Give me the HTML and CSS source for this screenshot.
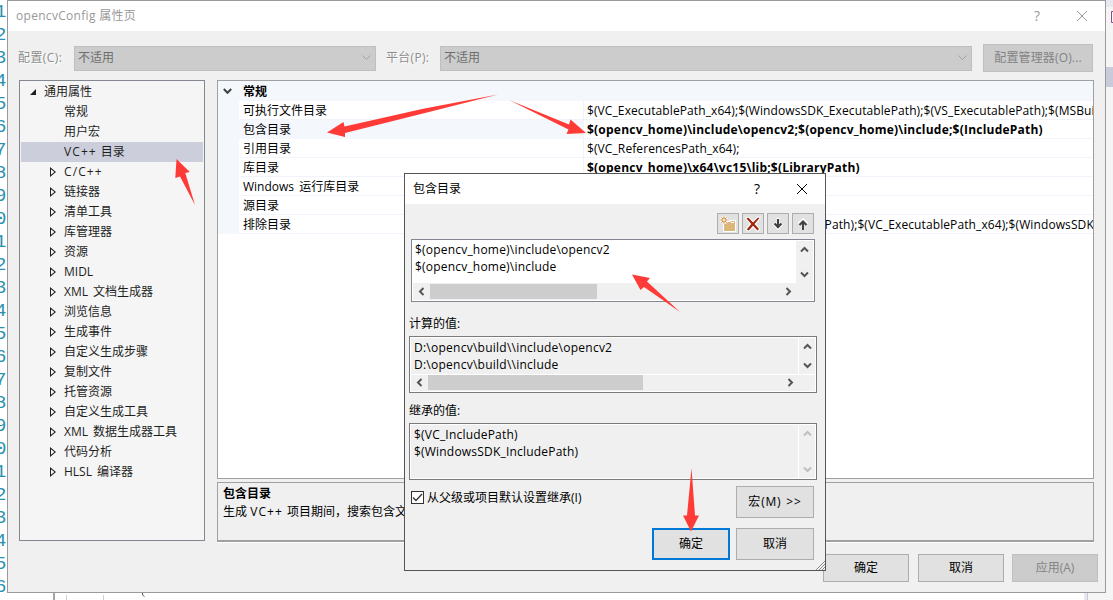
FILE: index.html
```html
<!DOCTYPE html>
<html lang="zh-CN">
<head>
    <meta charset="UTF-8">
    <title>opencvConfig 属性页</title>
    <link rel="stylesheet" href="styles.css">
</head>

<body>
    <!-- 后面的编辑器 -->
    <div class="line-numbers">
        <span>1</span><span>2</span><span>3</span><span>4</span><span>5</span><span>6</span><span>7</span><span>8</span><span>9</span><span>0</span>
        <span>1</span><span>2</span><span>3</span><span>4</span><span>5</span><span>6</span><span>7</span><span>8</span><span>9</span><span>0</span>
        <span>1</span><span>2</span><span>3</span><span>4</span><span>5</span><span>6</span>
    </div>
    <svg class="editor-bits" width="1113" height="600">
        <path d="M1084 592h4v8h-4z" fill="#e6e7f0"/>
        <path d="M1087.5 592v8" stroke="#c8c9d6"/>
        <path d="M1088 0h25v600h-25z" fill="#f5f5f5"/>
        <path d="M1104 0h9v7h-9z" fill="#e8e8f0"/>
        <path d="M1105 67h8v20h-8z" fill="#c9cbdb"/>
        <path d="M1115 11.5h-3.500v11h3.500" fill="none" stroke="#93478f"/>
        <path d="M54 592v8" stroke="#a5a5a5" stroke-width="2"/>
        <path d="M66.500 595v5M103.500 595v5" stroke="#cfcfcf"/>
        <path d="M142.500 592v3l2 1.500" stroke="#555" fill="none"/>
    </svg>

    <div class="window">
        <div class="title-bar">
            <span class="title">opencvConfig 属性页</span>
            <span class="help">?</span>
            <svg class="close" width="12" height="12"><path d="M1 1l10 10M11 1L1 11"/></svg>
        </div>

        <div class="config-row">
            <label class="config-label">配置(C):</label>
            <div class="select">不适用<svg width="9" height="6"><path d="M.5.5l4 4 4-4"/></svg></div>
            <label class="platform-label">平台(P):</label>
            <div class="select platform">不适用<svg width="9" height="6"><path d="M.5.5l4 4 4-4"/></svg></div>
            <button class="manager disabled">配置管理器(O)...</button>
        </div>

        <div class="content">
            <ul class="tree">
                <li class="root"><svg width="8" height="8"><path d="M7 1v6H1z" fill="#1e1e1e"/></svg>通用属性</li>
                <li>常规</li>
                <li>用户宏</li>
                <li class="selected"><span class="cpp">VC++</span>目录</li>
                <li class="node"><span class="cpp">C/C++</span></li>
                <li class="node">链接器</li>
                <li class="node">清单工具</li>
                <li class="node">库管理器</li>
                <li class="node">资源</li>
                <li class="node">MIDL</li>
                <li class="node">XML 文档生成器</li>
                <li class="node">浏览信息</li>
                <li class="node">生成事件</li>
                <li class="node">自定义生成步骤</li>
                <li class="node">复制文件</li>
                <li class="node">托管资源</li>
                <li class="node">自定义生成工具</li>
                <li class="node">XML 数据生成器工具</li>
                <li class="node">代码分析</li>
                <li class="node">HLSL 编译器</li>
            </ul>

            <div class="right">
                <div class="property-grid">
                    <div class="group"><svg width="9" height="7"><path d="M.8 1l3.700 3.800L8.200 1"/></svg>常规</div>
                    <div class="row"><span>可执行文件目录</span><span class="val">$(VC_ExecutablePath_x64);$(WindowsSDK_ExecutablePath);$(VS_ExecutablePath);$(MSBuild_ExecutablePath)</span></div>
                    <div class="row current"><span>包含目录</span><span class="val bold">$(opencv_home)\include\opencv2;$(opencv_home)\include;$(IncludePath)</span></div>
                    <div class="row"><span>引用目录</span><span class="val">$(VC_ReferencesPath_x64);</span></div>
                    <div class="row"><span>库目录</span><span class="val bold">$(opencv_home)\x64\vc15\lib;$(LibraryPath)</span></div>
                    <div class="row"><span>Windows 运行库目录</span><span class="val"></span></div>
                    <div class="row"><span>源目录</span><span class="val"></span></div>
                    <div class="row"><span>排除目录</span><span class="val">$(VC_IncludePath);$(WindowsSDK_IncludePath);$(VC_ExecutablePath_x64);$(WindowsSDK_ExecutablePath)</span></div>
                </div>
                <div class="description">
                    <b>包含目录</b>
                    <p>生成 <span class="cpp">VC++</span>项目期间，搜索包含文件时使用的目录。</p>
                </div>
            </div>
        </div>

        <div class="footer">
            <button>确定</button>
            <button>取消</button>
            <button class="disabled">应用(A)</button>
        </div>
    </div>

    <!-- 包含目录 对话框 -->
    <div class="dialog">
        <div class="title-bar">
            <span class="title">包含目录</span>
            <span class="help">?</span>
            <svg class="close" width="12" height="12"><path d="M1 1l10 10M11 1L1 11"/></svg>
        </div>

        <div class="toolbar">
            <button>
                <svg width="16" height="16">
                    <path d="M3 5h6l1-1h6v12H3z" fill="#fff"/>
                    <path d="M4 6h6l1-1h4v10H4z" fill="#dcb67a"/>
                    <path d="M11 6.500h3" stroke="#fff"/>
                    <circle cx="4" cy="4" r="4" fill="#f7f7f7"/>
                    <path d="M4 .5v7M.5 4h7M1.500 1.500l5 5M6.500 1.500l-5 5" stroke="#c27d1a"/>
                    <circle cx="4" cy="4" r="1" fill="#fff"/>
                </svg>
            </button>
            <button>
                <svg width="16" height="16"><path d="M1.500 2.500C3 1 4 2 5 3.300l3 3.200 5-5 1.500.5-5 6 4.500 5-1.500 1.500L8 9.800 3.800 14.500 1.700 13.500 6.300 8z" fill="#a1260d" stroke="#fff" stroke-width="2" paint-order="stroke"/></svg>
            </button>
            <button>
                <svg width="16" height="16">
                    <path d="M8 2v9M4 7.500l4 4 4-4" fill="none" stroke="#f9f9f9" stroke-width="4"/>
                    <path d="M8 3v9M4.500 7.500L8 11l3.500-3.500" fill="none" stroke="#424242" stroke-width="2.200"/>
                </svg>
            </button>
            <button>
                <svg width="16" height="16">
                    <path d="M8 14V5M4 8.500l4-4 4 4" fill="none" stroke="#f9f9f9" stroke-width="4"/>
                    <path d="M8 14V5M4.500 9L8 5.500 11.500 9" fill="none" stroke="#424242" stroke-width="2.200"/>
                </svg>
            </button>
        </div>

        <div class="list editable">
            <div class="lines">$(opencv_home)\include\opencv2<br>$(opencv_home)\include</div>
            <div class="v-scroll">
                <svg width="9" height="7"><path d="M1 5.500L4.500 2 8 5.500"/></svg>
                <svg width="9" height="7"><path d="M1 1.500L4.500 5 8 1.500"/></svg>
            </div>
            <div class="h-scroll">
                <svg width="7" height="9"><path d="M5.500 1L2 4.500 5.500 8"/></svg>
                <div class="thumb"></div>
                <svg width="7" height="9"><path d="M1.500 1L5 4.500 1.500 8"/></svg>
            </div>
        </div>

        <div class="caption">计算的值:</div>
        <div class="list evaluated">
            <div class="lines">D:\opencv\build\\include\opencv2<br>D:\opencv\build\\include</div>
            <div class="v-scroll">
                <svg width="9" height="7"><path d="M1 5.500L4.500 2 8 5.500"/></svg>
                <svg width="9" height="7"><path d="M1 1.500L4.500 5 8 1.500"/></svg>
            </div>
            <div class="h-scroll">
                <svg width="7" height="9"><path d="M5.500 1L2 4.500 5.500 8"/></svg>
                <div class="thumb"></div>
                <svg width="7" height="9"><path d="M1.500 1L5 4.500 1.500 8"/></svg>
            </div>
        </div>

        <div class="caption">继承的值:</div>
        <div class="list inherited">
            <div class="lines">$(VC_IncludePath)<br>$(WindowsSDK_IncludePath)</div>
            <div class="v-scroll">
                <svg width="9" height="7"><path d="M1 5.500L4.500 2 8 5.500"/></svg>
                <svg width="9" height="7"><path d="M1 1.500L4.500 5 8 1.500"/></svg>
            </div>
        </div>

        <div class="inherit-row">
            <span class="checkbox"><svg width="11" height="11"><path d="M1 5.500l3 3L10 2"/></svg></span>
            <span class="inherit-text">从父级或项目默认设置继承(I)</span>
            <button class="macro">宏(M) &gt;&gt;</button>
        </div>
        <div class="dialog-buttons">
            <button class="default">确定</button>
            <button>取消</button>
        </div>
        <svg class="grip" width="9" height="9"><path d="M0 9L9 0M3 9L9 3M6 9L9 6" stroke="#8c8c8c"/></svg>
    </div>

    <!-- 红色箭头标注 -->
    <svg class="arrows" width="1113" height="600" fill="#ff3b37">
        <path d="M498 94.500L422 109l-77.500 17.500-1-4.500-16.500 10.500 18 4.500v-4l80-20z"/>
        <path d="M509 100l60 24.500 1.500-5 15.500 13.500-19.500 1 2-4.500z"/>
        <path d="M176.500 159l13.300 13-4.500 1 9.700 32-15-28.500-4.700 1.500z"/>
        <path d="M632 274.500l18 3.500-3 3.500 33 30.500-36-25-3.500 3z"/>
        <path d="M691.500 468l3.500 47.500h4l-8 16-8-16h4z"/>
    </svg>
</body>
</html>
```
FILE: styles.css
```css
* {
    box-sizing: border-box;
}

body {
    position: relative;
    width: 1113px;
    height: 600px;
    margin: 0;
    overflow: hidden;
    background-color: #fff;
    color: #000;
    font-family: "Open Sans", "Noto Sans CJK SC", sans-serif;
    font-size: 12px;
    line-height: 16px;
}

button {
    padding: 0;
    border: 1px solid #adadad;
    background-color: #e1e1e1;
    color: #000;
    font: inherit;
}

svg {
    display: block;
    flex-shrink: 0;
}

/* 编辑器背景 */
.line-numbers {
    display: flex;
    flex-direction: column;
    width: 7px;
    padding-top: 1px;
    overflow: hidden;
    color: #2b91af;
    font-family: "Liberation Mono", monospace;
    font-size: 19px;
    line-height: 23px;
}

.line-numbers span {
    height: 23px;
    margin-left: -5px;
}

.editor-bits,
.arrows {
    position: absolute;
    top: 0;
    left: 0;
}

/* 属性页窗口 */
.window {
    position: absolute;
    top: 0;
    left: 7px;
    width: 1099px;
    height: 593px;
    border: 1px solid #9a9a9e;
    background-color: #f0f0f0;
}

.title-bar {
    display: flex;
    align-items: center;
    height: 30px;
    padding: 0 17px 0 8px;
    background-color: #fff;
}

.title {
    flex: 1;
}

.close path {
    fill: none;
    stroke: currentColor;
}

.help {
    font-size: 14px;
}

.window .title-bar {
    color: #999;
}

.window .help {
    margin-right: 36px;
}

.window .title {
    letter-spacing: 0.3px;
}

.config-row {
    display: flex;
    align-items: center;
    height: 28px;
    margin: 13px 12px 0 10px;
    color: #8d8d8d;
}

.config-label {
    width: 56px;
    letter-spacing: 0.4px;
    text-shadow: 1px 1px #fff;
}

.platform-label {
    width: 54px;
    margin-left: 10px;
    letter-spacing: 0.3px;
    text-shadow: 1px 1px #fff;
}

.select {
    display: flex;
    align-items: center;
    justify-content: space-between;
    width: 302px;
    height: 25px;
    padding: 0 4px 0 3px;
    border: 1px solid #bfbfbf;
    background-color: #ccc;
    color: #6d6d6d;
}

.select.platform {
    width: 532px;
}

.select path {
    fill: none;
    stroke: #a0a0a0;
}

.manager {
    width: 110px;
    height: 28px;
    margin-left: 11px;
    letter-spacing: 0.15px;
}

button.disabled {
    border-color: #bfbfbf;
    background-color: #ccc;
    color: #838383;
}

.content {
    display: flex;
    gap: 12px;
    height: 462px;
    margin: 8px 11px 0;
}

.tree {
    width: 186px;
    height: 461px;
    margin: 0;
    padding: 1px;
    border: 1px solid #828790;
    background-color: #f5f5f5;
    color: #1e1e1e;
    list-style: none;
    word-spacing: 2px;
}

.tree li {
    display: flex;
    align-items: center;
    height: 20px;
    padding-left: 43px;
}

.tree .root {
    gap: 7px;
    padding-left: 8px;
}

.tree .selected {
    background-color: #cccedb;
}

.tree .node {
    padding-left: 29px;
}

/* 加号比字母宽一些 */
.cpp {
    margin-right: 4px;
    letter-spacing: 1.1px;
}

/* 折叠的三角形 */
.tree .node::before {
    content: "";
    width: 6px;
    height: 10px;
    margin-right: 8px;
    background-color: #1e1e1e;
    clip-path: path(evenodd, "M0 0L6 5 0 10zM1 2.300V7.700L4.400 5z");
}

.right {
    display: flex;
    flex-direction: column;
    gap: 3px;
    width: 877px;
}

.property-grid {
    height: 399px;
    border: 1px solid #a0a0a0;
    background: linear-gradient(#f4f7fc, #f4f7fc) 0 0 / 21px 153px no-repeat #fff;
    overflow: hidden;
}

.group {
    display: flex;
    align-items: center;
    gap: 11px;
    height: 20px;
    padding: 1px 0 0 5px;
    background-color: #f4f7fc;
    font-weight: bold;
}

.group path {
    fill: none;
    stroke: #424242;
    stroke-width: 2;
}

.row {
    display: grid;
    grid-template-columns: 344px 1fr;
    height: 19px;
    margin-left: 21px;
    border-bottom: 1px solid #f0f3f9;
    line-height: 19px;
    white-space: nowrap;
    word-spacing: 2px;
}

.row span:first-child {
    padding-left: 4px;
}

.row .val {
    padding-left: 3px;
    border-left: 1px solid #f0f3f9;
    letter-spacing: 0.1px;
    overflow: hidden;
}

.row .bold {
    font-weight: bold;
    letter-spacing: 0.22px;
}

.row.current span:first-child {
    background-color: #f4f7fc;
}

.description {
    height: 60px;
    padding: 2px 5px;
    border: 1px solid #a0a0a0;
    border-bottom-width: 2px;
    box-shadow: 0 1px #fff;
    overflow: hidden;
}

.description b,
.description p {
    display: block;
    margin: 0;
    line-height: 18px;
}

.footer {
    display: flex;
    gap: 9px;
    margin: 12px 0 0 815px;
}

.footer button {
    width: 86px;
    height: 28px;
}

.footer .disabled {
    margin-left: -1px;
}

/* 对话框 */
.dialog {
    position: absolute;
    top: 173px;
    left: 404px;
    width: 422px;
    height: 398px;
    border: 1px solid #555;
    background-color: #f0f0f0;
}

.dialog .title-bar {
    padding-bottom: 1px;
}

.dialog .help {
    margin-right: 36px;
}

.toolbar {
    display: flex;
    justify-content: flex-end;
    gap: 3px;
    margin: 9px 11px 0 0;
}

.toolbar button {
    display: flex;
    align-items: center;
    justify-content: center;
    width: 22px;
    height: 21px;
}

.list {
    display: grid;
    grid-template-columns: 1fr 17px;
    grid-template-rows: 1fr 17px;
    margin: 0 8px 0 4px;
    border: 1px solid #7a7a7a;
    line-height: 17px;
}

.editable {
    height: 63px;
    margin: 5px 10px 0 6px;
    padding: 1px;
    border-color: #828790;
    background-color: #fff;
}

.evaluated,
.inherited {
    height: 57px;
    padding: 1px;
    box-shadow: inset 0 0 0 1px #fff;
}

.inherited {
    grid-template-rows: 1fr;
}

.lines {
    padding-left: 2px;
    letter-spacing: 0.2px;
}

.evaluated .lines,
.inherited .lines {
    padding: 1px 0 0 3px;
}

.evaluated .lines {
    height: 35px;
    letter-spacing: 0.25px;
}

.v-scroll {
    display: flex;
    flex-direction: column;
    align-items: center;
    justify-content: space-between;
    padding: 5px 0;
    background-color: #f0f0f0;
}

.v-scroll path,
.h-scroll path {
    fill: none;
    stroke: #555;
    stroke-width: 2;
}

.evaluated .v-scroll,
.inherited .v-scroll {
    border-left: 1px solid #fff;
}

.inherited .v-scroll path {
    stroke: #bfbfbf;
}

.h-scroll {
    display: flex;
    grid-column: 1 / 3;
    align-items: center;
    padding: 0 21px 0 5px;
    background-color: #f0f0f0;
}

.h-scroll svg:last-child {
    margin-left: auto;
}

.evaluated .h-scroll {
    padding-bottom: 1px;
    border-top: 1px solid #fff;
}

.thumb {
    width: 167px;
    height: 15px;
    margin-left: 5px;
    background-color: #cdcdcd;
}

.evaluated .thumb {
    width: 215px;
}

.caption {
    height: 30px;
    padding: 10px 0 0 4px;
}

.editable + .caption {
    height: 34px;
    padding-top: 14px;
}

.inherit-row {
    display: flex;
    align-items: center;
    height: 32px;
    margin: 6px 11px 0 6px;
}

.checkbox {
    width: 13px;
    height: 13px;
    margin: -9px 3px 0 0;
    border: 1px solid #333;
    background-color: #fff;
}

.checkbox path {
    fill: none;
    stroke: #333;
    stroke-width: 1.3;
}

.inherit-text {
    flex: 1;
    margin-top: -9px;
}

.macro,
.dialog-buttons button {
    width: 78px;
    height: 32px;
}

.macro {
    letter-spacing: 0.8px;
    word-spacing: 1px;
}

.dialog-buttons {
    display: flex;
    justify-content: flex-end;
    gap: 6px;
    margin: 10px 11px 0 0;
}

.dialog-buttons .default {
    border: 2px solid #0078d7;
}

.grip {
    position: absolute;
    right: 0;
    bottom: 0;
}
```
